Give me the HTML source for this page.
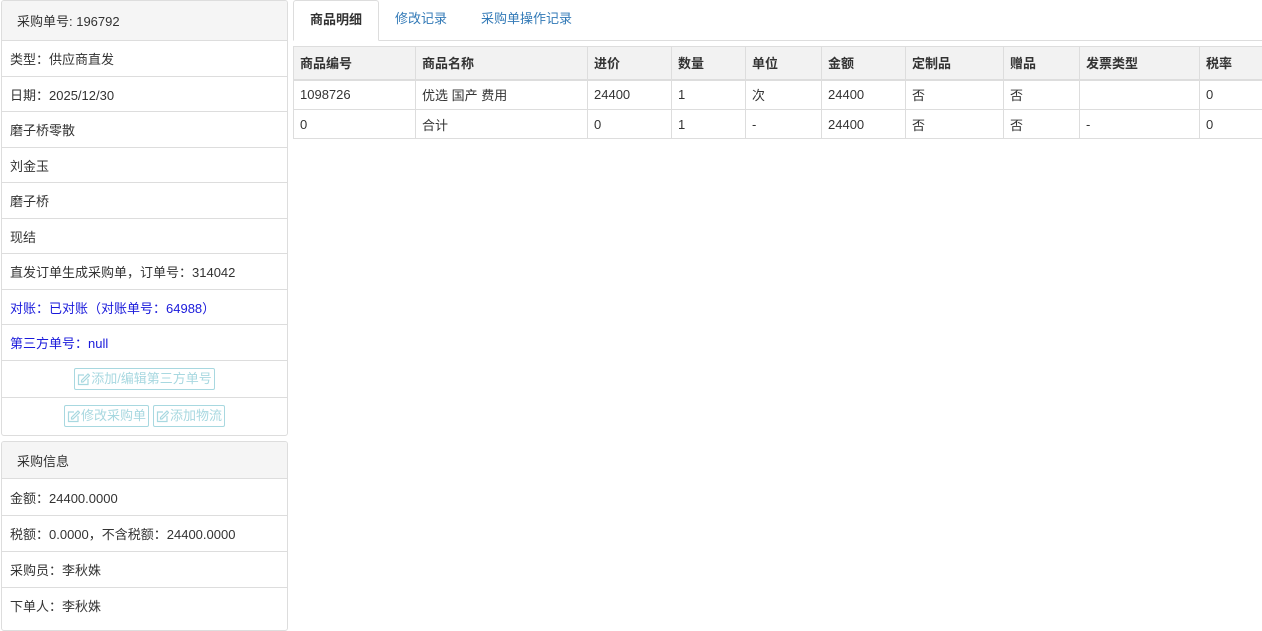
<!DOCTYPE html>
<html><head><meta charset="utf-8"><style>
*{box-sizing:border-box;margin:0;padding:0}
body{width:1262px;height:621px;overflow:hidden;background:#fff;font-family:"Liberation Sans","Noto Sans CJK SC",sans-serif;font-size:13px;color:#333;position:relative}
.panel{position:absolute;left:1px;width:287px;border:1px solid #ddd;border-radius:3px;background:#fff;overflow:hidden}
.ph{background:#f5f5f5;border-bottom:1px solid #ddd;padding-left:15px;display:flex;align-items:center}
.r{border-top:1px solid #ddd;padding-left:8px;display:flex;align-items:center}
.ph + .r{border-top:none}
.blue{color:#1a1adb}
.btnrow{justify-content:center;padding-left:0;gap:4px}
.btn{border:1px solid #a8d8e0;color:#a8d8e0;border-radius:2px;padding:1px 2px;font-size:13px;line-height:18px;display:inline-flex;align-items:center}
.btn svg{margin-right:1px}
.tabs{position:absolute;left:293px;top:0;width:969px;height:41px;border-bottom:1px solid #ddd}
.tab{position:absolute;top:0;height:41px;line-height:38px;color:#337ab7;font-size:13px}
.tab.act{border:1px solid #ddd;border-bottom-color:#fff;border-radius:3px 3px 0 0;color:#333;font-weight:bold;background:#fff;padding:0 16px}
table{position:absolute;left:293px;top:46px;border-collapse:collapse;table-layout:fixed;width:1000px}
td,th{border:1px solid #ddd;padding-left:6px;text-align:left;font-size:13px}
th{background:#f2f2f2;height:33px;border-bottom:2px solid #ddd;font-weight:bold}
td{height:30px}
tr:last-child td{height:29px}
</style></head><body>
<div class="panel" style="top:0;height:436px">
<div class="ph" style="height:40px">采购单号: 196792</div>
<div class="r" style="height:35px">类型：供应商直发</div>
<div class="r" style="height:35px">日期：2025/12/30</div>
<div class="r" style="height:36px">磨子桥零散</div>
<div class="r" style="height:35px">刘金玉</div>
<div class="r" style="height:36px">磨子桥</div>
<div class="r" style="height:35px">现结</div>
<div class="r" style="height:36px">直发订单生成采购单，订单号：314042</div>
<div class="r blue" style="height:35px">对账：已对账（对账单号：64988）</div>
<div class="r blue" style="height:36px">第三方单号：null</div>
<div class="r btnrow" style="height:37px"><span class="btn"><svg width="13" height="13" viewBox="0 0 13 13" fill="none" stroke="#a8d8e0" stroke-width="1.2"><path d="M7 2H1.5v9.5H11V6"/><path d="M11 1l1.5 1.5L6 9H4.5V7.5z"/></svg>添加/编辑第三方单号</span></div>
<div class="r btnrow" style="height:37px"><span class="btn"><svg width="13" height="13" viewBox="0 0 13 13" fill="none" stroke="#a8d8e0" stroke-width="1.2"><path d="M7 2H1.5v9.5H11V6"/><path d="M11 1l1.5 1.5L6 9H4.5V7.5z"/></svg>修改采购单</span><span class="btn"><svg width="13" height="13" viewBox="0 0 13 13" fill="none" stroke="#a8d8e0" stroke-width="1.2"><path d="M7 2H1.5v9.5H11V6"/><path d="M11 1l1.5 1.5L6 9H4.5V7.5z"/></svg>添加物流</span></div>
</div>
<div class="panel" style="top:441px;height:190px">
<div class="ph" style="height:37px">采购信息</div>
<div class="r" style="height:36px">金额：24400.0000</div>
<div class="r" style="height:36px">税额：0.0000，不含税额：24400.0000</div>
<div class="r" style="height:36px">采购员：李秋姝</div>
<div class="r" style="height:36px">下单人：李秋姝</div>
</div>
<div class="tabs">
<div class="tab act" style="left:0">商品明细</div>
<div class="tab" style="left:102px">修改记录</div>
<div class="tab" style="left:188px">采购单操作记录</div>
</div>
<table>
<colgroup><col style="width:122px"><col style="width:172px"><col style="width:84px"><col style="width:74px"><col style="width:76px"><col style="width:84px"><col style="width:98px"><col style="width:76px"><col style="width:120px"><col style="width:94px"></colgroup>
<tr><th>商品编号</th><th>商品名称</th><th>进价</th><th>数量</th><th>单位</th><th>金额</th><th>定制品</th><th>赠品</th><th>发票类型</th><th>税率</th></tr>
<tr><td>1098726</td><td>优选 国产 费用</td><td>24400</td><td>1</td><td>次</td><td>24400</td><td>否</td><td>否</td><td></td><td>0</td></tr>
<tr><td>0</td><td>合计</td><td>0</td><td>1</td><td>-</td><td>24400</td><td>否</td><td>否</td><td>-</td><td>0</td></tr>
</table>
</body></html>
